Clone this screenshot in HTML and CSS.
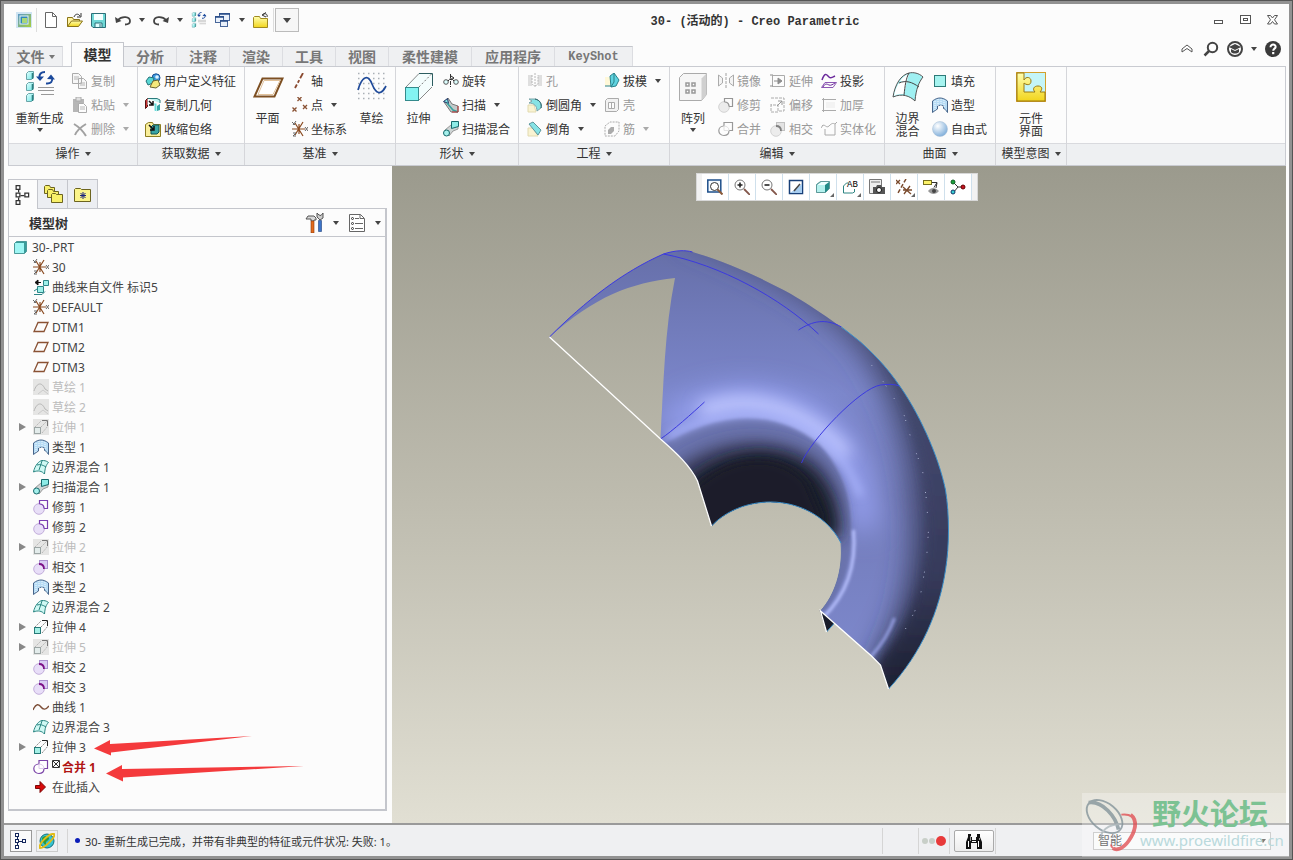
FILE: index.html
```html
<!DOCTYPE html>
<html lang="zh-CN">
<head>
    <meta charset="UTF-8" />
    <title>30- (活动的) - Creo Parametric</title>
    <link rel="stylesheet" href="styles.css">
</head>
<body>

    <!-- 图标库 -->
    <svg class="sprite" width="0" height="0" aria-hidden="true">
        <defs>
            <linearGradient id="gYellow" x1="0" y1="0" x2="0" y2="1"><stop offset="0" stop-color="#ffffb0"/><stop offset="1" stop-color="#f2d51c"/></linearGradient>
            <linearGradient id="gCyan" x1="0" y1="0" x2="1" y2="1"><stop offset="0" stop-color="#e4ffff"/><stop offset="1" stop-color="#6fe8e6"/></linearGradient>
            <radialGradient id="gBall" cx=".35" cy=".3" r=".7"><stop offset="0" stop-color="#fff"/><stop offset="1" stop-color="#85b2dc"/></radialGradient>
            <linearGradient id="gApp" x1="0" y1="0" x2="1" y2="1"><stop offset="0" stop-color="#5a98c9"/><stop offset="1" stop-color="#a9cf3d"/></linearGradient>
        </defs>

        <symbol id="i-app" viewBox="0 0 16 16"><rect width="16" height="16" fill="#cfe4f2"/><rect x="2" y="2" width="13" height="13" fill="url(#gApp)"/><rect x="4" y="4" width="8" height="8" fill="#2f86b8" stroke="#e6f5fa"/><rect x="6" y="6" width="5" height="5" fill="#a8d77a"/></symbol>
        <symbol id="i-new" viewBox="0 0 16 16"><path d="M2.500 .5h7l4 4v11h-11z" fill="#fff" stroke="#666"/><path d="M9.500 .5v4h4" fill="none" stroke="#666"/></symbol>
        <symbol id="i-open" viewBox="0 0 16 16"><path d="M.5 14.500v-9h5l1 2h6v2" fill="#fff3a0" stroke="#8a7418"/><path d="M.5 14.500l4-5.500h11l-4 5.500z" fill="url(#gYellow)" stroke="#8a7418"/><path d="M7 5c1-3 4-4 6-1m1-3v4h-4" fill="none" stroke="#333"/></symbol>
        <symbol id="i-save" viewBox="0 0 16 16"><path d="M.5 1.500h14v14H2l-1.500-1.500z" fill="#6fd8d6" stroke="#2d6f78"/><rect x="3" y="2" width="9" height="6" fill="#f4ffff"/><path d="M4 15v-4h7v4" fill="#dff" stroke="#2d6f78"/><path d="M9 12v3" stroke="#2d6f78"/></symbol>
        <symbol id="i-undo" viewBox="0 0 16 16"><path d="M3 8c4-4.500 12-3.500 12 1 0 2-2 3.500-5 3.500" fill="none" stroke="#444" stroke-width="1.800"/><path d="M0 5l1 6 5.500-2z" fill="#444"/></symbol>
        <symbol id="i-redo" viewBox="0 0 16 16"><path d="M13 8C9 3.500 1 4.500 1 9c0 2 2 3.500 5 3.500" fill="none" stroke="#444" stroke-width="1.800"/><path d="M16 5l-1 6-5.500-2z" fill="#444"/></symbol>
        <symbol id="i-regen" viewBox="0 0 32 32"><g fill="url(#gCyan)" stroke="#6aa5a8"><path d="M2.500 2.500l2-2h5v6l-2 2h-5z"/><path d="M2.500 13.500l2-2h5v6l-2 2h-5z"/><path d="M2.500 24.500l2-2h5v6l-2 2h-5z"/></g><path d="M8.500 2v6M8.500 13v6M8.500 24v6" stroke="#2c7f80" stroke-width="1.600"/><path d="M21 1c-4 0-6 2-5.500 6M22 12.500c5 .5 7-2 6-6" fill="none" stroke="#1c4a9c" stroke-width="2"/><path d="M12 5.500h8l-4 4.500zM23 8l4-4.500 4 5z" fill="#1c4a9c"/><path d="M14 16.500h16M14 19.500h16M17 23.500h13" stroke="#999"/></symbol>
        <symbol id="i-windows" viewBox="0 0 16 16"><g fill="#eaf1fb" stroke="#49679a"><rect x="4.500" y="1.500" width="10" height="7"/><rect x=".5" y="4.500" width="8" height="6"/><rect x="5.500" y="8.500" width="7" height="6"/></g><path d="M4 2h11M0 5h9M5 9h8" stroke="#244a86" stroke-width="1.500"/></symbol>
        <symbol id="i-closefolder" viewBox="0 0 16 16"><path d="M.5 15.500V5.500l1-1h5l1 2h7v9z" fill="url(#gYellow)" stroke="#a08a20"/><path d="M14 5c1-3-2-4-4-2.500M9 3l4-2.500M9 3l4 2" fill="none" stroke="#333"/></symbol>

        <symbol id="i-copy" viewBox="0 0 16 16"><path d="M.5.5h6l3 3v7h-9zM6.500 5.500h5l3 3v7h-8z" fill="#f4f4f4" stroke="#777"/><path d="M2 4h5M2 6h4M8 10h5M8 12h5" stroke="#888"/></symbol>
        <symbol id="i-paste" viewBox="0 0 16 16"><rect x="1" y="2" width="11" height="13" fill="#888"/><rect x="4" y="0" width="5" height="4" fill="#ccc" stroke="#777"/><path d="M6.500 6.500h5l3 3v6h-8z" fill="#fff" stroke="#777"/><path d="M8 10h5M8 12h5" stroke="#888"/></symbol>
        <symbol id="i-delete" viewBox="0 0 16 16"><path d="M2 3c5 3 9 7 12 12M14 3C9 6 5 9 3 14" fill="none" stroke="#666" stroke-width="2"/></symbol>

        <symbol id="i-udf" viewBox="0 0 16 16"><circle cx="11" cy="4.800" r="4" fill="#3b9be0" stroke="#1d4f91"/><circle cx="12" cy="4" r="1.800" fill="#dff2ff"/><path d="M1 8l3-4 5 1-1 5-5 2z" fill="#57d6d3" stroke="#246f77"/><path d="M5 14l3-6 5-1 2 5-4 3z" fill="#f4e87b" stroke="#6a6330"/></symbol>
        <symbol id="i-copygeom" viewBox="0 0 16 16"><path d="M.5 3.500l2-2v8l-2 2z" fill="#c33" stroke="#511"/><path d="M3 1.500h9l3 1.500v3" fill="#bdf3f0" stroke="#2b7a7c"/><path d="M3 2v6M8 6h4v9l-3-1V8z" fill="#67dcda" stroke="#fff"/><path d="M4 4l4 4M8 4v4H4" fill="none" stroke="#111" stroke-width="1.500"/><path d="M12 9l3-2v6l-3 1z" fill="#37a5a5"/></symbol>
        <symbol id="i-shrink" viewBox="0 0 16 16"><path d="M.5 15.500v-12l3-2h4l1 2h7v12z" fill="#f9ee9a" stroke="#8c7d21"/><path d="M6 6l2-2h6v7l-2 2H6z" fill="#3aa5a5" stroke="#155"/><path d="M4 4l5 5M9 5v4H5" fill="none" stroke="#111" stroke-width="1.500"/></symbol>

        <symbol id="i-plane32" viewBox="0 0 32 32"><path d="M10.500 7.500h20l-8 18h-20z" fill="#fff" stroke="#7d4f22" stroke-width="2"/><path d="M12 9.500h16L21 23.500H6z" fill="none" stroke="#e2c39c"/></symbol>
        <symbol id="i-plane" viewBox="0 0 16 16"><path d="M5 3.500h10l-4 9H1z" fill="none" stroke="#8a5234" stroke-width="1.300"/></symbol>
        <symbol id="i-axis" viewBox="0 0 16 16"><path d="M11 0L3 15" stroke="#8a4a30" stroke-width="1.800" stroke-dasharray="6 2 3 2"/></symbol>
        <symbol id="i-point" viewBox="0 0 16 16"><g stroke="#8a5234" stroke-width="1.300"><path d="M5.500 0l4 4M9.500 0l-4 4M.5 10.500l4 4M4.500 10.500l-4 4M11 8l4 4M15 8l-4 4"/></g></symbol>
        <symbol id="i-csys" viewBox="0 0 16 16"><path d="M0 8h13M3 2l8 13M11 1L3 14M7 3v10" stroke="#8a4a20" stroke-width="1.200"/><path d="M0 1l3 3M4 0L1 4M13 6l3 4M16 6l-3 4M1 12h3l-3 3h3" stroke="#666" fill="none"/></symbol>
        <symbol id="i-sketch32" viewBox="0 0 32 32"><path d="M2 2.500h30M2 7.500h30M2 12.500h30M2 17.500h30M2 22.500h30M2 27.500h30" stroke="#aab0b6" stroke-width="1.500" stroke-dasharray="1.500 3.500"/><path d="M2 19c4-14 10-16 14-6s9 12 14 2" fill="none" stroke="#1f4a9a" stroke-width="1.700"/></symbol>

        <symbol id="i-extrude32" viewBox="0 0 32 32"><path d="M2 16L16 2h13v14L15 30" fill="#f4fdfd"/><rect x="2.500" y="16.500" width="13" height="13" fill="#83f3f2" stroke="#348a8c"/><path d="M3 16L16 2.500M16 29L29 16" stroke="#888"/><path d="M16 16L29 2.500" stroke="#777" stroke-dasharray="2 2"/><path d="M16 2.500h13.500V15" fill="none" stroke="#2d5d60"/></symbol>
        <symbol id="i-extrude" viewBox="0 0 16 16"><rect x="1.500" y="8.500" width="6" height="6" fill="#a5f0e6" stroke="#277a78"/><path d="M8 8l6-6M2 8l6-6M9 14l6-7" stroke="#888" stroke-dasharray="2 1"/><path d="M9 1.500h5.500V7" fill="none" stroke="#222"/></symbol>
        <symbol id="i-revolve" viewBox="0 0 16 16"><path d="M7.500 1v14" stroke="#333" stroke-dasharray="4 1 1 1"/><circle cx="3" cy="9" r="2.300" fill="#dff" stroke="#555"/><circle cx="13" cy="9" r="2.300" fill="#dff" stroke="#555"/><path d="M5 8c2-3 4-3 6 0M8 3l3 2-3 2" stroke="#222" fill="none"/></symbol>
        <symbol id="i-sweep" viewBox="0 0 16 16"><path d="M1 5l4-4 4 6 6 2v6H8z" fill="#c2c9c9" stroke="#777"/><path d="M.5 4.500l4-3 1 5z" fill="#7fe5e2" stroke="#236"/><path d="M4 6l6 7 5 2" fill="none" stroke="#36a29d" stroke-width="1.500"/><path d="M15 9v6H9" fill="none" stroke="#b33"/></symbol>
        <symbol id="i-blend" viewBox="0 0 16 16"><path d="M2 9l6-5h7v4l-5 2-4 5z" fill="#cfd5d5" stroke="#999"/><path d="M8.500.5h7v5l-7 2z" fill="#8debe6" stroke="#17696b"/><circle cx="3.500" cy="12" r="3" fill="#a5f0ec" stroke="#17696b"/></symbol>

        <symbol id="i-hole" viewBox="0 0 16 16"><path d="M1 2h4v11H1zM11 2h4v11h-4z" fill="#ccc"/><path d="M5 2v9c1 2 5 2 6 0V2M8 0v15" fill="none" stroke="#888" stroke-dasharray="2 1"/></symbol>
        <symbol id="i-round" viewBox="0 0 16 16"><path d="M1 8h6l2 7H1z" fill="#f9f3d2" stroke="#e2dab0"/><path d="M2 2h6c5 1 7 5 6 9l-4 3c0-5-3-8-8-8l3-2z" fill="#86e3e5" stroke="#7da5a8"/><path d="M8 2c5 1 7 5 6 9" fill="none" stroke="#245f66"/></symbol>
        <symbol id="i-chamfer" viewBox="0 0 16 16"><path d="M1 7h5l5 8H1z" fill="#f9f3d2" stroke="#e2dab0"/><path d="M2 3l4-2 8 8-3 5z" fill="#86e3e5" stroke="#5e969b"/></symbol>
        <symbol id="i-draft" viewBox="0 0 16 16"><path d="M1 4h5v9H1z" fill="#fff8d8"/><path d="M6 3l4-3 5 7-3 6-5 1z" fill="#5fd3e0" stroke="#2b8189"/><path d="M10 0v9l-3 5M1 13h6" fill="none" stroke="#2b8189"/></symbol>
        <symbol id="i-shell" viewBox="0 0 16 16"><path d="M1.500 3.500l2-2h11v11l-2 2h-11z" fill="#ededed" stroke="#777"/><path d="M4.500 5.500h6v6h-6zM7.500 5v6" fill="#fff" stroke="#777"/></symbol>
        <symbol id="i-rib" viewBox="0 0 16 16"><path d="M1 5l5-4h9v9l-4 5H1z" fill="none" stroke="#777" stroke-dasharray="2 1"/><path d="M4 13V9l3-3h3v4l-3 3z" fill="#777"/></symbol>

        <symbol id="i-pattern32" viewBox="0 0 32 32"><path d="M2.500 6.500l4-4h23v21l-5 6h-22z" fill="#f6f6f6" stroke="#aaa"/><path d="M24.500 7.500l5-5v21l-5 6z" fill="#d0d0d0"/><g fill="#fff" stroke="#999" stroke-width="1.500"><rect x="9" y="12" width="3" height="3"/><rect x="15" y="12" width="3" height="3"/><rect x="9" y="19" width="3" height="3"/><rect x="15" y="19" width="3" height="3"/></g></symbol>
        <symbol id="i-mirror" viewBox="0 0 16 16"><path d="M.5 2v11l4-3V5zM15.500 2v11l-4-3V5z" fill="#eee" stroke="#777"/><path d="M8 0v16" stroke="#666" stroke-dasharray="3 1"/></symbol>
        <symbol id="i-trim" viewBox="0 0 16 16"><circle cx="6" cy="10" r="5.300" fill="#e8dff7" stroke="#c3aedb"/><path d="M6.500 5V1.500h8v8H11M6.500 5c3 0 4.500 2 4.500 4.500" fill="none" stroke="#7b3fb0" stroke-width="1.200"/></symbol>
        <symbol id="i-merge" viewBox="0 0 16 16"><path d="M6 5V1.500h8.500v8H11c0 3-2 5-5 5S.8 12.500.8 9.800 3 5 6 5z" fill="#fff" stroke="#7b45a8" stroke-width="1.200"/><path d="M6 5c3 0 5 2 5 4.500H6z" fill="none" stroke="#dccbea"/></symbol>
        <symbol id="i-intersect" viewBox="0 0 16 16"><rect x="6.500" y="1.500" width="8" height="8" fill="#dacdf3" stroke="#aa90cf"/><circle cx="6" cy="10" r="5.300" fill="#e8def8" stroke="#c3aedb"/><path d="M6 5c3 0 5 2 5 5" fill="none" stroke="#7c0f86" stroke-width="1.800"/></symbol>
        <symbol id="i-extend" viewBox="0 0 16 16"><path d="M2.500 2.500h12v11h-12z" fill="none" stroke="#777"/><path d="M0 2h3M0 13h3M4 8h6M8 5l4 3-4 3z" fill="#444" stroke="#444"/></symbol>
        <symbol id="i-offset" viewBox="0 0 16 16"><path d="M1 1h13v13H9M1 7v8h7V8H1" fill="none" stroke="#777" stroke-dasharray="3 1"/><path d="M7 9l5-5M8 4h4v4" fill="none" stroke="#555"/></symbol>
        <symbol id="i-project" viewBox="0 0 16 16"><path d="M1 7c3-9 5-5 7-3s4 0 6-1" fill="none" stroke="#6b2a9c" stroke-width="1.500"/><path d="M4 9.500h11.500l-3.500 5H.5z" fill="none" stroke="#8d58b4"/><path d="M2 14c2-4 4-3 6-2s4-1 6-2" fill="none" stroke="#6b2a9c"/></symbol>
        <symbol id="i-thicken" viewBox="0 0 16 16"><path d="M1 2.500h14M1 13.500h14M2.500 1v14" stroke="#777" fill="none"/><path d="M5 5h9v6H5" fill="#eee"/></symbol>
        <symbol id="i-solidify" viewBox="0 0 16 16"><path d="M1 5c3-3 4 3 7 0s4-3 6-2v11H4V8" fill="none" stroke="#777"/><path d="M14 3l2-2M0 7l2-3" stroke="#777"/></symbol>

        <symbol id="i-boundary32" viewBox="0 0 32 32"><path d="M1 26C3 13 9 4 17 2c4-1 10 0 14 4-4 5-7 12-8 24-5-5-13-8-22-4z" fill="#9ff0f2" stroke="#555"/><path d="M2 25C3 19 5 14 8 11c3-1 5-1 7-1l-3 13c-3 0-7 0-10 2zM8 10c3-4 5-6 9-7l-2 7z" fill="#fff"/><path d="M7 12c7-3 13-1 20 4M17 2c-3 5-4 13-5 22" fill="none" stroke="#444"/></symbol>
        <symbol id="i-boundary" viewBox="0 0 16 16"><path d="M.5 13C2 6 6 2 9 1.500c2 0 4 0 6.500 2C13 6 12 9 11.500 15 9 12 5 11 .5 13z" fill="#cff9f4" stroke="#2b8582"/><path d="M4 6c3-1 6 0 9 2M9 2L6 11" fill="none" stroke="#2b8582"/></symbol>
        <symbol id="i-fill" viewBox="0 0 16 16"><rect x="2.500" y="2.500" width="11" height="11" fill="#a5f3ef" stroke="#2d7a78"/></symbol>
        <symbol id="i-style" viewBox="0 0 16 16"><path d="M.5 4c5-4 10-4 15 0v11.500c-2-3-3-4-4-4V9c-2-1-4-1-6 0v3c-2 1-3 2-5 3.500z" fill="#b7dcf5" stroke="#47658a"/><path d="M3 4v9M6 2v7M9 2v7M12 3v8" stroke="#f2faff" stroke-dasharray="1 1"/></symbol>
        <symbol id="i-ball" viewBox="0 0 16 16"><circle cx="8" cy="8" r="7.500" fill="url(#gBall)" stroke="#a4bcd4" stroke-width=".5"/></symbol>
        <symbol id="i-puzzle32" viewBox="0 0 32 32"><rect x="1.500" y="1.500" width="29" height="29" fill="#c4f5f8" stroke="#d2a02e"/><path d="M2 2h7v7c2-4 7-3 7 1 0 5-5 4-7 2v9h11c-3-3-1-6 3-6s5 3 2 6h5v9H2z" fill="url(#gYellow)" stroke="#9a7a12"/></symbol>

        <symbol id="i-tree" viewBox="0 0 16 16"><g fill="#fff" stroke="currentColor"><rect x="2.500" y=".5" width="3" height="3"/><rect x="2.500" y="6.500" width="3" height="3"/><rect x="2.500" y="12.500" width="3" height="3"/><rect x="9.500" y="6.500" width="3" height="3"/></g><path d="M4.500 4v2M4.500 10v2M6 8.500h3" stroke="currentColor"/></symbol>
        <symbol id="i-folders" viewBox="0 0 20 20"><g fill="#f8f06a" stroke="#6c6420"><path d="M1.500 9.500v-7l1-1h4l1 2h4v6z"/><path d="M4.500 13.500v-7l1-1h4l1 2h5v6z"/><path d="M8.500 18.500v-8l1-1h3l1 1h6v8z"/></g></symbol>
        <symbol id="i-favs" viewBox="0 0 20 20"><path d="M1.500 17.500v-12l1-1h5l1 1h9v12z" fill="#fbf48a" stroke="#6c6420"/><path d="M10 8v7M7 11.500h6M7.500 9l5 5M12.500 9l-5 5" stroke="#1a237e"/></symbol>
        <symbol id="i-tools" viewBox="0 0 20 20"><path d="M1 6l2-3h6l2 2v2H9v1H6V6z" fill="#d9d9d9" stroke="#555"/><path d="M6 8h3v12H6z" fill="#e36a1c" stroke="#8b3a0c" stroke-width=".6"/><path d="M12 0v4l3 3 3-2 0-5-2 2.500-2-.5z" fill="#ccc" stroke="#555"/><path d="M13.500 7.500h3v11h-3z" fill="#3c74c8" stroke="#1c3f7c" stroke-width=".6"/></symbol>
        <symbol id="i-list" viewBox="0 0 20 20"><path d="M2.500 1.500h11l4 4v13h-15z" fill="#fff" stroke="#666"/><path d="M13 1.500v4h4M8 5.500h4M8 10.500h8M8 15.500h8" fill="none" stroke="#666"/><g fill="#fff" stroke="#333"><circle cx="5.500" cy="5.500" r="1"/><circle cx="5.500" cy="10.500" r="1"/><circle cx="5.500" cy="15.500" r="1"/></g></symbol>
        <symbol id="i-part" viewBox="0 0 16 16"><path d="M1.500 4.500l2-2h10v10l-2 2h-10z" fill="#3a9c9a" stroke="#4c9a9a"/><rect x="2" y="4" width="9" height="10" fill="#9ff6f4"/></symbol>
        <symbol id="i-curvefile" viewBox="0 0 16 16"><path d="M10.500 1.500h5v5h-5zM4.500 7.500h6v6h-6z" fill="#9ff0ea" stroke="#2c8587"/><path d="M1 15.500h8l3-3M1 12l3-2" fill="none" stroke="#2c8587"/><path d="M3 3.500h5M5 1L2 3.500 5 6z" fill="#111" stroke="#111"/></symbol>
        <symbol id="i-curve" viewBox="0 0 16 16"><path d="M0 11c3-7 6-6 8-3s5 3 8-1" fill="none" stroke="#7d4f38" stroke-width="1.400"/></symbol>
        <symbol id="i-sketch" viewBox="0 0 16 16"><path d="M1 12c3-9 8-9 11-2l3 2" fill="none" stroke="#888"/><path d="M5 15l5-4 5 4" fill="none" stroke="#aaa"/></symbol>
        <symbol id="i-insert" viewBox="0 0 16 16"><path d="M2.500 6.500H7v-4l5.500 5.500L7 13.500v-4H2.500z" fill="#d90b0b" stroke="#7d0606"/></symbol>

        <symbol id="i-fit" viewBox="0 0 16 16"><rect x=".8" y="1" width="13" height="12" fill="#f4faff" stroke="#1e4f8a" stroke-width="1.500"/><circle cx="7.500" cy="7.500" r="4" fill="#fff" stroke="#333"/><path d="M10.500 10.500l5 5" stroke="#8a5a3a" stroke-width="2"/></symbol>
        <symbol id="i-zoomin" viewBox="0 0 16 16"><circle cx="6" cy="6" r="5" fill="#fff" stroke="#777"/><path d="M3.500 6h5M6 3.500v5" stroke="#222" stroke-width="1.600"/><path d="M10 10l6 6" stroke="#83564a" stroke-width="1.800"/></symbol>
        <symbol id="i-zoomout" viewBox="0 0 16 16"><circle cx="6" cy="6" r="5" fill="#fff" stroke="#777"/><path d="M3.500 6h5" stroke="#222" stroke-width="1.600"/><path d="M10 10l6 6" stroke="#83564a" stroke-width="1.800"/></symbol>
        <symbol id="i-repaint" viewBox="0 0 16 16"><rect x="1.500" y="1.500" width="13" height="13" fill="#fff" stroke="#173f78" stroke-width="1.500"/><path d="M2 14L14 5v9z" fill="#a7cdf0"/><path d="M12 5L6 12" stroke="#444" stroke-width="1.500"/></symbol>
        <symbol id="i-cube" viewBox="0 0 16 16"><path d="M1.500 5.500l4-3h9v7l-4 4h-9z" fill="#238b88" stroke="#5d9999"/><path d="M2 6l4-3h8l-4 3z" fill="#eff"/><rect x="2" y="6" width="8" height="7" fill="#b5f1ee"/></symbol>
        <symbol id="i-camera" viewBox="0 0 16 16"><path d="M.5.5h12v14H.5zM2 3h9" fill="#eee" stroke="#777"/><path d="M4 8h3l1-2h4l1 2h3v7H4z" fill="#555"/><circle cx="10" cy="11" r="2.500" fill="#fff" stroke="#111"/></symbol>
        <symbol id="i-datums" viewBox="0 0 16 16"><path d="M0 1l4 4M4 1L0 5" stroke="#7a4a2c" stroke-width="1.300"/><path d="M10 0L2 14" stroke="#7a4a2c" stroke-width="1.500" stroke-dasharray="4 2"/><path d="M7 8l8 7M14 7l-6 8M7 11h9" stroke="#7a4a2c" stroke-width="1.300"/></symbol>
        <symbol id="i-annot" viewBox="0 0 16 16"><rect x=".5" y="1.500" width="8" height="4" fill="#fdf36a" stroke="#77701e"/><path d="M9 3.500h5l-3 5M14 4l-1 5" stroke="#333" fill="none"/><path d="M5 12c3-4 7-4 11 0-3 4-8 4-11 0z" fill="#999"/><circle cx="11" cy="12" r="2" fill="#444"/></symbol>
        <symbol id="i-spin" viewBox="0 0 16 16"><path d="M8 8L3 3M8 8l-5 6M8 8h6" stroke="#333"/><circle cx="3" cy="3" r="2" fill="#19a33c" stroke="#0b5a20"/><circle cx="3" cy="13" r="2" fill="#35cfd2" stroke="#136"/><circle cx="13" cy="8" r="2" fill="#c5121f" stroke="#600"/></symbol>

        <symbol id="i-min" viewBox="0 0 16 16"><rect x="3.500" y="8.500" width="8" height="3" fill="#fff" stroke="#555"/></symbol>
        <symbol id="i-max" viewBox="0 0 16 16"><rect x="2.500" y="3.500" width="10" height="8" fill="#fff" stroke="#555"/><rect x="5.500" y="6.500" width="4" height="2" fill="#fff" stroke="#555"/></symbol>
        <symbol id="i-close" viewBox="0 0 16 16"><path d="M2.500 3.500h3l2 2.500 2-2.500h3l-3 4.300 3 4.200h-3l-2-2.500-2 2.500h-3l3-4.200z" fill="#fff" stroke="#555"/></symbol>
        <symbol id="i-chevron" viewBox="0 0 16 16"><path d="M3 8l5-4 5 4v3L8 7.500 3 11z" fill="#fff" stroke="#555"/></symbol>
        <symbol id="i-search" viewBox="0 0 16 16"><circle cx="9.500" cy="6.500" r="4.700" fill="#fff" stroke="#444" stroke-width="2"/><path d="M6 10l-4.500 4.500" stroke="#444" stroke-width="2.500"/></symbol>
        <symbol id="i-learn" viewBox="0 0 16 16"><circle cx="8" cy="8" r="7" fill="#fff" stroke="#444" stroke-width="2"/><path d="M2 6l6-3 6 3-6 3z" fill="#444"/><path d="M4 8v3c2 2 6 2 8 0V8l-4 2z" fill="#444"/></symbol>
        <symbol id="i-help" viewBox="0 0 16 16"><circle cx="8" cy="8" r="8" fill="#3a3a3a"/><path d="M5.500 6.200C5.500 2.500 11 3 10.600 6c-.2 1.600-2.400 1.800-2.400 3.700" fill="none" stroke="#fff" stroke-width="2"/><rect x="7.100" y="11" width="2.200" height="2.200" fill="#fff"/></symbol>
        <symbol id="i-browser" viewBox="0 0 16 16"><circle cx="8" cy="8" r="7" fill="#35c2d0" stroke="#14707c"/><path d="M3 5c3-3 6-2 7 0s-4 3-3 6-4-1-4-6z" fill="#2f9a3a"/><path d="M1 15C-1 11 10 0 15 1c2 3-9 14-14 14z" fill="none" stroke="#e2bd16" stroke-width="2"/></symbol>
        <symbol id="i-find" viewBox="0 0 20 20"><path d="M4 3h3v3h1v3h4V6h1V3h3v3l2 5v7h-5v-6H7v6H2v-7l2-5z" fill="#111"/><path d="M4.500 10v6M14.500 10v6M8 10.500h4" stroke="#fff"/><path d="M6.500 5v5M15.500 7v2" stroke="#999"/></symbol>
    </svg>

    <div class="window">
        <div class="app">

            <!-- 标题栏 -->
            <header class="titlebar">
                <svg class="icon app-logo"><use href="#i-app"/></svg>
                <div class="quick-access">
                    <button aria-label="新建"><svg class="icon"><use href="#i-new"/></svg></button>
                    <button aria-label="打开"><svg class="icon"><use href="#i-open"/></svg></button>
                    <button aria-label="保存"><svg class="icon"><use href="#i-save"/></svg></button>
                    <button aria-label="撤消"><svg class="icon"><use href="#i-undo"/></svg></button>
                    <button aria-label="撤消列表"><i class="caret"></i></button>
                    <button aria-label="重做"><svg class="icon"><use href="#i-redo"/></svg></button>
                    <button aria-label="重做列表"><i class="caret"></i></button>
                    <button aria-label="重新生成"><svg class="icon"><use href="#i-regen"/></svg></button>
                    <button aria-label="窗口"><svg class="icon"><use href="#i-windows"/></svg></button>
                    <button aria-label="窗口列表"><i class="caret"></i></button>
                    <button aria-label="关闭"><svg class="icon"><use href="#i-closefolder"/></svg></button>
                </div>
                <button class="qa-more" aria-label="自定义快速访问工具栏"><i class="caret caret-lg"></i></button>
                <h1 class="title">30- (活动的) - Creo Parametric</h1>
                <div class="window-buttons">
                    <button aria-label="最小化"><svg class="icon"><use href="#i-min"/></svg></button>
                    <button aria-label="最大化"><svg class="icon"><use href="#i-max"/></svg></button>
                    <button aria-label="关闭窗口"><svg class="icon"><use href="#i-close"/></svg></button>
                </div>
            </header>

            <!-- 选项卡 -->
            <nav class="tabs">
                <button class="tab tab-file">文件<i class="caret"></i></button>
                <button class="tab active">模型</button>
                <button class="tab">分析</button>
                <button class="tab">注释</button>
                <button class="tab">渲染</button>
                <button class="tab">工具</button>
                <button class="tab">视图</button>
                <button class="tab tab-wide">柔性建模</button>
                <button class="tab tab-wide">应用程序</button>
                <button class="tab tab-latin">KeyShot</button>
                <div class="tab-tools">
                    <button aria-label="最小化功能区"><svg class="icon"><use href="#i-chevron"/></svg></button>
                    <button aria-label="搜索"><svg class="icon"><use href="#i-search"/></svg></button>
                    <button aria-label="学习"><svg class="icon"><use href="#i-learn"/></svg></button>
                    <button aria-label="学习列表"><i class="caret"></i></button>
                    <button aria-label="帮助"><svg class="icon"><use href="#i-help"/></svg></button>
                </div>
            </nav>

            <!-- 功能区 -->
            <div class="ribbon">
                <section class="group group-ops">
                    <div class="group-body">
                        <button class="big"><svg><use href="#i-regen"/></svg><span>重新生成</span><i class="caret"></i></button>
                        <div class="col">
                            <button class="cmd" disabled><svg class="icon"><use href="#i-copy"/></svg>复制</button>
                            <button class="cmd" disabled><svg class="icon"><use href="#i-paste"/></svg>粘贴<i class="caret"></i></button>
                            <button class="cmd" disabled><svg class="icon"><use href="#i-delete"/></svg>删除<i class="caret"></i></button>
                        </div>
                    </div>
                    <button class="group-name">操作<i class="caret"></i></button>
                </section>

                <section class="group group-data">
                    <div class="group-body">
                        <div class="col">
                            <button class="cmd"><svg class="icon"><use href="#i-udf"/></svg>用户定义特征</button>
                            <button class="cmd"><svg class="icon"><use href="#i-copygeom"/></svg>复制几何</button>
                            <button class="cmd"><svg class="icon"><use href="#i-shrink"/></svg>收缩包络</button>
                        </div>
                    </div>
                    <button class="group-name">获取数据<i class="caret"></i></button>
                </section>

                <section class="group group-datum">
                    <div class="group-body">
                        <button class="big"><svg><use href="#i-plane32"/></svg><span>平面</span></button>
                        <div class="col">
                            <button class="cmd"><svg class="icon"><use href="#i-axis"/></svg>轴</button>
                            <button class="cmd"><svg class="icon"><use href="#i-point"/></svg>点<i class="caret"></i></button>
                            <button class="cmd"><svg class="icon"><use href="#i-csys"/></svg>坐标系</button>
                        </div>
                        <button class="big"><svg><use href="#i-sketch32"/></svg><span>草绘</span></button>
                    </div>
                    <button class="group-name">基准<i class="caret"></i></button>
                </section>

                <section class="group group-shape">
                    <div class="group-body">
                        <button class="big"><svg><use href="#i-extrude32"/></svg><span>拉伸</span></button>
                        <div class="col">
                            <button class="cmd"><svg class="icon"><use href="#i-revolve"/></svg>旋转</button>
                            <button class="cmd"><svg class="icon"><use href="#i-sweep"/></svg>扫描<i class="caret"></i></button>
                            <button class="cmd"><svg class="icon"><use href="#i-blend"/></svg>扫描混合</button>
                        </div>
                    </div>
                    <button class="group-name">形状<i class="caret"></i></button>
                </section>

                <section class="group group-eng">
                    <div class="group-body">
                        <div class="col">
                            <button class="cmd" disabled><svg class="icon"><use href="#i-hole"/></svg>孔</button>
                            <button class="cmd"><svg class="icon"><use href="#i-round"/></svg>倒圆角<i class="caret"></i></button>
                            <button class="cmd"><svg class="icon"><use href="#i-chamfer"/></svg>倒角<i class="caret"></i></button>
                        </div>
                        <div class="col">
                            <button class="cmd"><svg class="icon"><use href="#i-draft"/></svg>拔模<i class="caret"></i></button>
                            <button class="cmd" disabled><svg class="icon"><use href="#i-shell"/></svg>壳</button>
                            <button class="cmd" disabled><svg class="icon"><use href="#i-rib"/></svg>筋<i class="caret"></i></button>
                        </div>
                    </div>
                    <button class="group-name">工程<i class="caret"></i></button>
                </section>

                <section class="group group-edit">
                    <div class="group-body">
                        <button class="big"><svg><use href="#i-pattern32"/></svg><span>阵列</span><i class="caret"></i></button>
                        <div class="col">
                            <button class="cmd" disabled><svg class="icon"><use href="#i-mirror"/></svg>镜像</button>
                            <button class="cmd" disabled><svg class="icon"><use href="#i-trim"/></svg>修剪</button>
                            <button class="cmd" disabled><svg class="icon"><use href="#i-merge"/></svg>合并</button>
                        </div>
                        <div class="col">
                            <button class="cmd" disabled><svg class="icon"><use href="#i-extend"/></svg>延伸</button>
                            <button class="cmd" disabled><svg class="icon"><use href="#i-offset"/></svg>偏移</button>
                            <button class="cmd" disabled><svg class="icon"><use href="#i-intersect"/></svg>相交</button>
                        </div>
                        <div class="col">
                            <button class="cmd"><svg class="icon"><use href="#i-project"/></svg>投影</button>
                            <button class="cmd" disabled><svg class="icon"><use href="#i-thicken"/></svg>加厚</button>
                            <button class="cmd" disabled><svg class="icon"><use href="#i-solidify"/></svg>实体化</button>
                        </div>
                    </div>
                    <button class="group-name">编辑<i class="caret"></i></button>
                </section>

                <section class="group group-surf">
                    <div class="group-body">
                        <button class="big"><svg><use href="#i-boundary32"/></svg><span>边界混合</span></button>
                        <div class="col">
                            <button class="cmd"><svg class="icon"><use href="#i-fill"/></svg>填充</button>
                            <button class="cmd"><svg class="icon"><use href="#i-style"/></svg>造型</button>
                            <button class="cmd"><svg class="icon"><use href="#i-ball"/></svg>自由式</button>
                        </div>
                    </div>
                    <button class="group-name">曲面<i class="caret"></i></button>
                </section>

                <section class="group group-intent">
                    <div class="group-body">
                        <button class="big"><svg><use href="#i-puzzle32"/></svg><span>元件界面</span></button>
                    </div>
                    <button class="group-name">模型意图<i class="caret"></i></button>
                </section>
                <div class="ribbon-rest"></div>
            </div>

            <main class="main">
                <!-- 导航器 -->
                <aside class="sidebar">
                    <div class="nav-tabs">
                        <button class="active" aria-label="模型树"><svg class="icon-lg"><use href="#i-tree"/></svg></button>
                        <button aria-label="文件夹浏览器"><svg class="icon-lg"><use href="#i-folders"/></svg></button>
                        <button aria-label="收藏夹"><svg class="icon-lg"><use href="#i-favs"/></svg></button>
                    </div>
                    <div class="panel">
                        <div class="panel-head">
                            <h2>模型树</h2>
                            <button aria-label="设置"><svg class="icon-lg"><use href="#i-tools"/></svg><i class="caret"></i></button>
                            <button aria-label="显示"><svg class="icon-lg"><use href="#i-list"/></svg><i class="caret"></i></button>
                        </div>
                        <ul class="tree">
                            <li class="root"><svg class="icon"><use href="#i-part"/></svg>30-.PRT</li>
                            <li><svg class="icon"><use href="#i-csys"/></svg>30</li>
                            <li><svg class="icon"><use href="#i-curvefile"/></svg>曲线来自文件 标识5</li>
                            <li><svg class="icon"><use href="#i-csys"/></svg>DEFAULT</li>
                            <li><svg class="icon"><use href="#i-plane"/></svg>DTM1</li>
                            <li><svg class="icon"><use href="#i-plane"/></svg>DTM2</li>
                            <li><svg class="icon"><use href="#i-plane"/></svg>DTM3</li>
                            <li class="suppressed"><svg class="icon"><use href="#i-sketch"/></svg>草绘 1</li>
                            <li class="suppressed"><svg class="icon"><use href="#i-sketch"/></svg>草绘 2</li>
                            <li class="suppressed parent"><svg class="icon"><use href="#i-extrude"/></svg>拉伸 1</li>
                            <li><svg class="icon"><use href="#i-style"/></svg>类型 1</li>
                            <li><svg class="icon"><use href="#i-boundary"/></svg>边界混合 1</li>
                            <li class="parent"><svg class="icon"><use href="#i-blend"/></svg>扫描混合 1</li>
                            <li><svg class="icon"><use href="#i-trim"/></svg>修剪 1</li>
                            <li><svg class="icon"><use href="#i-trim"/></svg>修剪 2</li>
                            <li class="suppressed parent"><svg class="icon"><use href="#i-extrude"/></svg>拉伸 2</li>
                            <li><svg class="icon"><use href="#i-intersect"/></svg>相交 1</li>
                            <li><svg class="icon"><use href="#i-style"/></svg>类型 2</li>
                            <li><svg class="icon"><use href="#i-boundary"/></svg>边界混合 2</li>
                            <li class="parent"><svg class="icon"><use href="#i-extrude"/></svg>拉伸 4</li>
                            <li class="suppressed parent"><svg class="icon"><use href="#i-extrude"/></svg>拉伸 5</li>
                            <li><svg class="icon"><use href="#i-intersect"/></svg>相交 2</li>
                            <li><svg class="icon"><use href="#i-intersect"/></svg>相交 3</li>
                            <li><svg class="icon"><use href="#i-curve"/></svg>曲线 1</li>
                            <li><svg class="icon"><use href="#i-boundary"/></svg>边界混合 3</li>
                            <li class="parent"><svg class="icon"><use href="#i-extrude"/></svg>拉伸 3
                                <svg class="arrow arrow-first" viewBox="0 0 158 20"><path d="M0 12.500L16 4v4L158 0 17 16.500v3z"/></svg>
                            </li>
                            <li class="failed"><svg class="icon"><use href="#i-merge"/></svg><svg class="fail-mark" viewBox="0 0 8 8"><path d="M.5.5h7v7h-7zM1 1l6 6M7 1L1 7"/></svg>合并 1
                                <svg class="arrow arrow-second" viewBox="0 0 198 18"><path d="M0 8.500L16 0v4L198 1 17 12.500v4z"/></svg>
                            </li>
                            <li><svg class="icon"><use href="#i-insert"/></svg>在此插入</li>
                        </ul>
                    </div>
                </aside>

                <!-- 图形窗口 -->
                <section class="viewport">
                    <svg class="model" viewBox="392 166 893 657" preserveAspectRatio="xMidYMid meet">
                        <defs>
                            <clipPath id="body">
                                <path d="M549 337C585 301 622 272 663 254C675 250 685 250 692 252C720 260 755 275 783 290C802 300 838 324 860 342C880 360 890 373 897 383C917 410 938 455 945 490C949 515 949 545 945 570C939 610 922 652 888 689L880 665L871 656L820 611C834 596 843 570 840.500 543C828 518 800 502 770 502C747 502 725 511 711 526L697 481C690 466 676 453 660 439C663 385 664 330 674.500 278C630 283 595 296 549 337Z"/>
                            </clipPath>
                            <filter id="b1" x="500" y="200" width="500" height="540" filterUnits="userSpaceOnUse"><feGaussianBlur stdDeviation="1.500"/></filter>
                            <filter id="b4" x="500" y="200" width="500" height="540" filterUnits="userSpaceOnUse"><feGaussianBlur stdDeviation="4"/></filter>
                            <filter id="b8" x="500" y="200" width="500" height="540" filterUnits="userSpaceOnUse"><feGaussianBlur stdDeviation="8"/></filter>
                            <filter id="b14" x="500" y="200" width="500" height="540" filterUnits="userSpaceOnUse"><feGaussianBlur stdDeviation="14"/></filter>
                            <linearGradient id="base" x1="0" y1="250" x2="0" y2="660" gradientUnits="userSpaceOnUse">
                                <stop offset="0" stop-color="#666fa9"/><stop offset=".35" stop-color="#7b86ca"/><stop offset=".6" stop-color="#727bb9"/><stop offset="1" stop-color="#7d88cc"/>
                            </linearGradient>
                            <linearGradient id="edge" x1="0" y1="250" x2="0" y2="690" gradientUnits="userSpaceOnUse">
                                <stop offset="0" stop-color="#4a5076"/><stop offset=".5" stop-color="#3f4468"/><stop offset=".75" stop-color="#363a5a"/><stop offset="1" stop-color="#1c1f30"/>
                            </linearGradient>
                        </defs>
                        <g clip-path="url(#body)" fill="none">
                            <rect x="540" y="240" width="420" height="460" fill="url(#base)"/>
                            <!-- 外缘暗部 -->
                            <path d="M680 236C760 268 820 302 857 345C895 400 914 465 913 530C912 580 900 625 872 664L888 730L1000 640V380L880 300L700 220Z" fill="url(#edge)" filter="url(#b14)"/>
                            <path d="M868 330C905 390 926 460 927 530C926 580 912 625 876 664L888 730L1000 640V380Z" fill="url(#edge)" filter="url(#b4)" opacity=".85"/>
                            <!-- 高光 -->
                            <path d="M665 428C725 385 800 398 838 442C858 470 866 500 862 530" stroke="#98a3f4" stroke-width="26" filter="url(#b14)"/>
                            <path d="M700 412C750 392 805 410 846 456" stroke="#c0c7ff" stroke-width="16" filter="url(#b8)"/>
                            <!-- 内缘暗部 -->
                            <path d="M658 448C715 410 775 408 818 444C842 468 853 500 850 545C848 575 836 598 824 612L700 560Z" fill="#6a73ad" filter="url(#b1)"/>
                            <path d="M672 470C720 432 785 434 818 464C836 484 842 507 838 536L700 545Z" fill="#3c4060" filter="url(#b8)"/>
                            <path d="M684 484C730 444 785 446 814 474C830 492 836 510 837 536L700 560Z" fill="#181a27" filter="url(#b8)"/>
                            <path d="M694 488C732 452 780 452 806 482L822 520L700 545Z" fill="#1a1c2a" filter="url(#b4)"/>
                            <path d="M667 437C725 406 785 406 826 442C844 461 852 476 860 496" stroke="#a9b3fb" stroke-width="6" filter="url(#b4)"/>
                            <path d="M853 530C856 563 848 593 822 618" stroke="#b9c2ff" stroke-width="3" filter="url(#b1)"/>
                            <path d="M870 657C882 644 889 632 894 618" stroke="#a3adf5" stroke-width="3" filter="url(#b1)" opacity=".8"/>
                        </g>
                        <path d="M819 610L826 632L834 623Z" fill="#191c2a"/>
                        <g fill="none" stroke="#3b39e0">
                            <path d="M549 337C585 301 622 272 663 254C675 250 685 250 692 252"/>
                            <path d="M663 254C720 265 780 298 818 334"/>
                            <path d="M798 330C812 321 825 318 841 327"/>
                            <path d="M801 463C810 440 860 388 880 385C888 384 893 384 899 386"/>
                            <path d="M660 439C672 431 692 413 704 402"/>
                        </g>
                        <g fill="none" stroke="#3c8fc8">
                            <path d="M841 327L860 342C880 360 890 373 897 383C917 410 938 455 945 490C949 515 949 545 945 570C939 610 922 652 888 689"/>
                            <path d="M711 526C725 511 747 502 770 502C800 502 828 518 840.500 543M826 632L834 623"/>
                            <path d="M840.500 543C843 570 834 596 820 611" stroke="#6876a8"/>
                        </g>
                        <path d="M549 337L660 439C676 453 690 466 697 481L711 526M826 632L820 611L871 656L880 665L888 689" fill="none" stroke="#fff" stroke-width="1.300"/>
                        <path d="M871 365L883 382L903 413L911 440L922 470L926 500L928 530L926 560L920 595L914 612L898 642" fill="none" stroke="#a9b0cf" stroke-width="1" stroke-dasharray="1 19 1 4 1 14"/>
                    </svg>
                    <div class="view-toolbar">
                        <button aria-label="重新调整"><svg class="icon"><use href="#i-fit"/></svg></button>
                        <button aria-label="放大"><svg class="icon"><use href="#i-zoomin"/></svg></button>
                        <button aria-label="缩小"><svg class="icon"><use href="#i-zoomout"/></svg></button>
                        <button aria-label="重画"><svg class="icon"><use href="#i-repaint"/></svg></button>
                        <button class="more" aria-label="显示样式"><svg class="icon"><use href="#i-cube"/></svg></button>
                        <button class="more" aria-label="已保存方向"><svg class="icon" viewBox="0 0 16 16"><path d="M1.500 14V7l3-3h2M12.500 10v3l-2 1h-9" fill="none" stroke="#2d8482"/><text x="5" y="8" font-family="Liberation Mono" font-size="9">AB</text></svg></button>
                        <button aria-label="视图管理器"><svg class="icon"><use href="#i-camera"/></svg></button>
                        <button class="more" aria-label="基准显示"><svg class="icon"><use href="#i-datums"/></svg></button>
                        <button aria-label="注释显示"><svg class="icon"><use href="#i-annot"/></svg></button>
                        <button aria-label="旋转中心"><svg class="icon"><use href="#i-spin"/></svg></button>
                    </div>
                </section>
            </main>

            <!-- 状态栏 -->
            <footer class="statusbar">
                <button class="status-btn pressed" aria-label="显示导航器"><svg class="icon"><use href="#i-tree"/></svg></button>
                <button class="status-btn" aria-label="显示浏览器"><svg class="icon"><use href="#i-browser"/></svg></button>
                <p class="message">30- 重新生成已完成，并带有非典型的特征或元件状况: 失败: 1。</p>
                <div class="cell"></div>
                <div class="cell lights"><i></i><i></i><i class="on"></i></div>
                <div class="cell cell-find"><button class="find-btn" aria-label="查找"><svg class="icon-lg"><use href="#i-find"/></svg></button></div>
                <div class="filter">
                    <select aria-label="选择过滤器"><option>智能</option></select>
                    <i class="caret"></i>
                </div>
            </footer>
        </div>

        <!-- 水印 -->
        <div class="watermark">
            <svg viewBox="0 0 60 60"><g fill="none"><ellipse cx="22" cy="22" rx="22" ry="14" transform="rotate(40 22 22)" stroke="#7e8f96" stroke-width="2"/><path d="M37 36C34 22 20 5 5 7" stroke="#7e8f96" stroke-width="4"/><path d="M40 20c18-2 19 14 9 27S29 58 29 52" stroke="#e0474c" stroke-width="2"/><path d="M50 20c8 6 5 18-2 28S34 58 31 56" stroke="#e0474c" stroke-width="4"/><path d="M40 30c-14 0-24 8-21 17" stroke="#a9b4b8" stroke-width="2"/></g></svg>
            <div>
                <strong>野火论坛</strong>
                <span>www.proewildfire.cn</span>
            </div>
        </div>
    </div>

</body>
</html>
```
FILE: styles.css
```css
* {
    margin: 0;
    padding: 0;
    box-sizing: border-box;
}

body {
    font-family: "Noto Sans", "Noto Sans CJK SC", sans-serif;
    font-size: 12px;
    color: #333;
    overflow: hidden;
}

button {
    font: inherit;
    color: inherit;
    background: none;
    border: none;
    cursor: pointer;
}

ul {
    list-style: none;
}

.sprite {
    position: absolute;
}

.icon {
    width: 16px;
    height: 16px;
    flex: none;
    display: block;
}

.icon-lg {
    width: 20px;
    height: 20px;
    flex: none;
    display: block;
}

.caret {
    flex: none;
    display: block;
    border: 3px solid transparent;
    border-top: 4px solid #444;
    border-bottom: 0;
}

.caret-lg {
    border-width: 4px;
    border-top-width: 5px;
    border-bottom: 0;
}

/* 窗口 */
.window {
    position: relative;
    height: 100vh;
    padding: 3px;
    border: 1px solid #555;
    background: #929292;
}

.app {
    display: flex;
    flex-direction: column;
    height: 100%;
    background: #fcfcfc;
}

/* 标题栏 */
.titlebar {
    display: flex;
    align-items: center;
    height: 32px;
    padding: 0 8px 0 12px;
}

.quick-access {
    display: flex;
    align-items: center;
    gap: 8px;
    height: 24px;
    margin-left: 4px;
    padding: 0 4px 0 6px;
    border-left: 1px solid #ddd;
    border-right: 1px solid #ddd;
}

.qa-more {
    display: flex;
    align-items: center;
    justify-content: center;
    width: 24px;
    height: 24px;
    margin-left: 1px;
    background: #f6f6f6;
    border: 1px solid #bbb;
}

.title {
    flex: 1;
    text-align: center;
    font: bold 12px "Liberation Mono", "Noto Sans CJK SC", monospace;
    color: #333;
}

.window-buttons {
    display: flex;
    gap: 11px;
}

/* 选项卡 */
.tabs {
    display: flex;
    align-items: flex-end;
    height: 30px;
    padding: 0 4px;
}

.tab {
    display: flex;
    align-items: center;
    justify-content: center;
    min-width: 53px;
    height: 20px;
    font-size: 14px;
    font-weight: bold;
    line-height: 18px;
    color: #777;
    background: #eff0f2;
    border-top: 1px solid #c4c6cc;
    border-right: 1px solid #dcdde1;
}

.tab-file {
    gap: 4px;
    min-width: 55px;
    margin-right: 8px;
    border-left: 1px solid #c4c6cc;
}

.tab-file .caret {
    border-top-color: #777;
}

.tab.active {
    position: relative;
    height: 25px;
    margin-bottom: -1px;
    color: #333;
    background: #fcfcfc;
    border: 1px solid #c4c6cc;
    border-bottom: none;
}

.tab-wide {
    min-width: 83px;
}

.tab-latin {
    min-width: 78px;
    font: bold 12px "Liberation Mono", monospace;
}

.tab-tools {
    display: flex;
    align-items: center;
    align-self: center;
    gap: 8px;
    margin: 0 4px 4px auto;
}

/* 功能区 */
.ribbon {
    display: flex;
    height: 100px;
    margin: 0 3px 0 4px;
    border: 1px solid #c9cbd1;
}

.group {
    display: flex;
    flex-direction: column;
    border-right: 1px solid #d5d6da;
}

.group-body {
    flex: 1;
    display: grid;
    align-items: start;
}

.group-name,
.ribbon-rest {
    background: #eef0f2;
    border-top: 1px solid #d9dade;
}

.group-name {
    display: flex;
    align-items: center;
    justify-content: center;
    gap: 5px;
    height: 22px;
    line-height: 16px;
    padding-bottom: 2px;
}

.ribbon-rest {
    flex: 1;
    align-self: flex-end;
    height: 22px;
}

.group-ops .group-body { grid-template-columns: 61px 67px; }
.group-data .group-body { grid-template-columns: 101px; padding-left: 5px; }
.group-datum .group-body { grid-template-columns: 45px 58px 47px; }
.group-shape .group-body { grid-template-columns: 45px 77px; }
.group-eng .group-body { grid-template-columns: 77px 67px; padding-left: 6px; }
.group-edit .group-body { grid-template-columns: 46px 52px 51px 65px; }
.group-surf .group-body { grid-template-columns: 45px 65px; }
.group-intent .group-body { grid-template-columns: 70px; }

.col {
    display: flex;
    flex-direction: column;
    padding-top: 2px;
}

.cmd {
    display: flex;
    align-items: center;
    gap: 3px;
    height: 24px;
    padding-left: 2px;
    white-space: nowrap;
}

.cmd .caret {
    margin-left: 5px;
}

.cmd:disabled {
    color: #999;
}

.cmd:disabled .icon {
    filter: grayscale(1);
    opacity: 0.6;
}

.cmd:disabled .caret {
    border-top-color: #aaa;
}

.big {
    display: flex;
    flex-direction: column;
    align-items: center;
    padding-top: 4px;
    line-height: 13px;
    white-space: nowrap;
}

.big svg {
    width: 32px;
    height: 32px;
    margin-bottom: 9px;
}

.big .caret {
    margin-top: 3px;
}

/* 两行标签 */
.group-surf .big span,
.group-intent .big span {
    width: 26px;
    white-space: normal;
}

/* 主区域 */
.main {
    flex: 1;
    display: flex;
    min-height: 0;
    padding-right: 3px;
}

.sidebar {
    display: flex;
    flex-direction: column;
    width: 388px;
    padding: 13px 5px 12px 4px;
}

.nav-tabs {
    display: flex;
}

.nav-tabs button {
    display: flex;
    align-items: center;
    justify-content: center;
    width: 30px;
    height: 29px;
    background: #eceef2;
    border: 1px solid #c4c6cc;
    border-left: none;
    border-bottom: none;
}

.nav-tabs .active {
    position: relative;
    height: 30px;
    margin-bottom: -1px;
    background: #fcfcfc;
    border-left: 1px solid #c4c6cc;
}

.panel {
    flex: 1;
    min-height: 0;
    border: 1px solid #c4c6cc;
    border-right-width: 2px;
    border-bottom-width: 2px;
}

.panel-head {
    display: flex;
    align-items: center;
    gap: 8px;
    height: 28px;
    padding: 0 4px 0 20px;
    border-bottom: 1px solid #c4c6cc;
}

.panel-head h2 {
    flex: 1;
    font-size: 13px;
}

.panel-head button {
    display: flex;
    align-items: center;
    gap: 8px;
}

.tree li {
    position: relative;
    display: flex;
    align-items: center;
    gap: 3px;
    height: 20px;
    padding-left: 24px;
    color: #444;
    white-space: nowrap;
}

.tree .root {
    padding-left: 4px;
}

.tree .parent::before {
    content: "";
    margin: 0 4px 0 -14px;
    border: 4px solid transparent;
    border-left: 7px solid #888;
    border-right: 0;
}

.tree .suppressed {
    color: #bbb;
}

.suppressed .icon {
    background: #d8d8cc;
    filter: grayscale(0.8);
    opacity: 0.6;
}

.tree .failed {
    color: #b01414;
    font-weight: bold;
}

.fail-mark {
    width: 8px;
    height: 8px;
    margin-bottom: 6px;
    margin-right: -1px;
    fill: none;
    stroke: #333;
}

.arrow {
    position: absolute;
    fill: #f43a3c;
}

.arrow-first {
    left: 85px;
    top: -1px;
    width: 158px;
    height: 20px;
}

.arrow-second {
    left: 97px;
    top: 8px;
    width: 198px;
    height: 18px;
}

.viewport {
    position: relative;
    flex: 1;
    min-width: 0;
    display: flex;
    align-items: flex-start;
    justify-content: center;
    padding-top: 7px;
    background: linear-gradient(#9b9a8d, #bdbbae 50%, #e1dfd3);
}

.model {
    position: absolute;
    inset: 0;
    width: 100%;
    height: 100%;
}

.view-toolbar {
    position: relative;
    display: flex;
    height: 28px;
    margin-right: 4px;
    padding: 0 5px;
    background: #f2f2f2;
    border: 1px solid #d8d8d8;
}

.view-toolbar button {
    position: relative;
    display: flex;
    align-items: center;
    justify-content: center;
    width: 27px;
    background: #fff;
    border-right: 1px solid #cfe0ec;
}

.view-toolbar .more::after {
    content: "";
    position: absolute;
    right: 2px;
    bottom: 3px;
    border-left: 4px solid transparent;
    border-bottom: 4px solid #666;
}

/* 状态栏 */
.statusbar {
    display: flex;
    align-items: center;
    height: 33px;
    padding: 0 18px 0 6px;
    background: #eff0f2;
    border-top: 2px solid #9a9a9a;
}

.status-btn {
    display: flex;
    align-items: center;
    justify-content: center;
    width: 22px;
    height: 22px;
    margin-right: 4px;
    color: #14275c;
    border: 1px solid #ccc;
}

.status-btn.pressed {
    background: #fafafa;
    border: 1px solid #999;
}

.message {
    flex: 1;
    display: flex;
    align-items: center;
    gap: 5px;
    height: 24px;
    margin-left: 5px;
    padding-left: 7px;
    font-size: 11px;
    border-left: 1px solid #d5d5d5;
}

.message::before {
    content: "";
    width: 5px;
    height: 5px;
    border-radius: 50%;
    background: #0a1cb8;
}

.cell {
    display: flex;
    align-items: center;
    width: 36px;
    height: 26px;
    border-left: 1px solid #d5d5d5;
}

.lights {
    width: 31px;
    gap: 1px;
    padding-left: 3px;
}

.lights i {
    width: 6px;
    height: 6px;
    border-radius: 50%;
    background: #c8cfc8;
}

.lights .on {
    width: 10px;
    height: 10px;
    background: #e83a3a;
}

.cell-find {
    width: 47px;
    padding-left: 4px;
    border-right: 1px solid #d5d5d5;
}

.find-btn {
    display: flex;
    align-items: center;
    justify-content: center;
    width: 40px;
    height: 22px;
    background: linear-gradient(#fff, #ececec);
    border: 1px solid #aaa;
    border-radius: 2px;
}

.filter {
    display: flex;
    align-items: center;
    width: 178px;
    height: 18px;
    margin-left: 97px;
    padding-right: 4px;
    background: #f8f9fa;
    border: 1px solid #bbb;
}

.filter select {
    flex: 1;
    height: 16px;
    padding-left: 4px;
    font: inherit;
    line-height: 14px;
    color: #333;
    background: none;
    border: none;
    appearance: none;
}

/* 水印 */
.watermark {
    position: absolute;
    right: 3px;
    bottom: 2px;
    display: flex;
    width: 207px;
    height: 64px;
    padding: 2px;
    background: rgba(255, 255, 255, 0.3);
    pointer-events: none;
}

.watermark svg {
    width: 56px;
    height: 58px;
    flex: none;
    opacity: 0.75;
    overflow: visible;
}

.watermark div {
    display: flex;
    flex-direction: column;
    white-space: nowrap;
}

.watermark strong {
    margin-left: 12px;
    font-family: "Noto Sans CJK SC", sans-serif;
    font-size: 29px;
    line-height: 34px;
    color: #7cc293;
}

.watermark span {
    font-size: 15px;
    line-height: 22px;
    color: #b9d9dc;
}
```
